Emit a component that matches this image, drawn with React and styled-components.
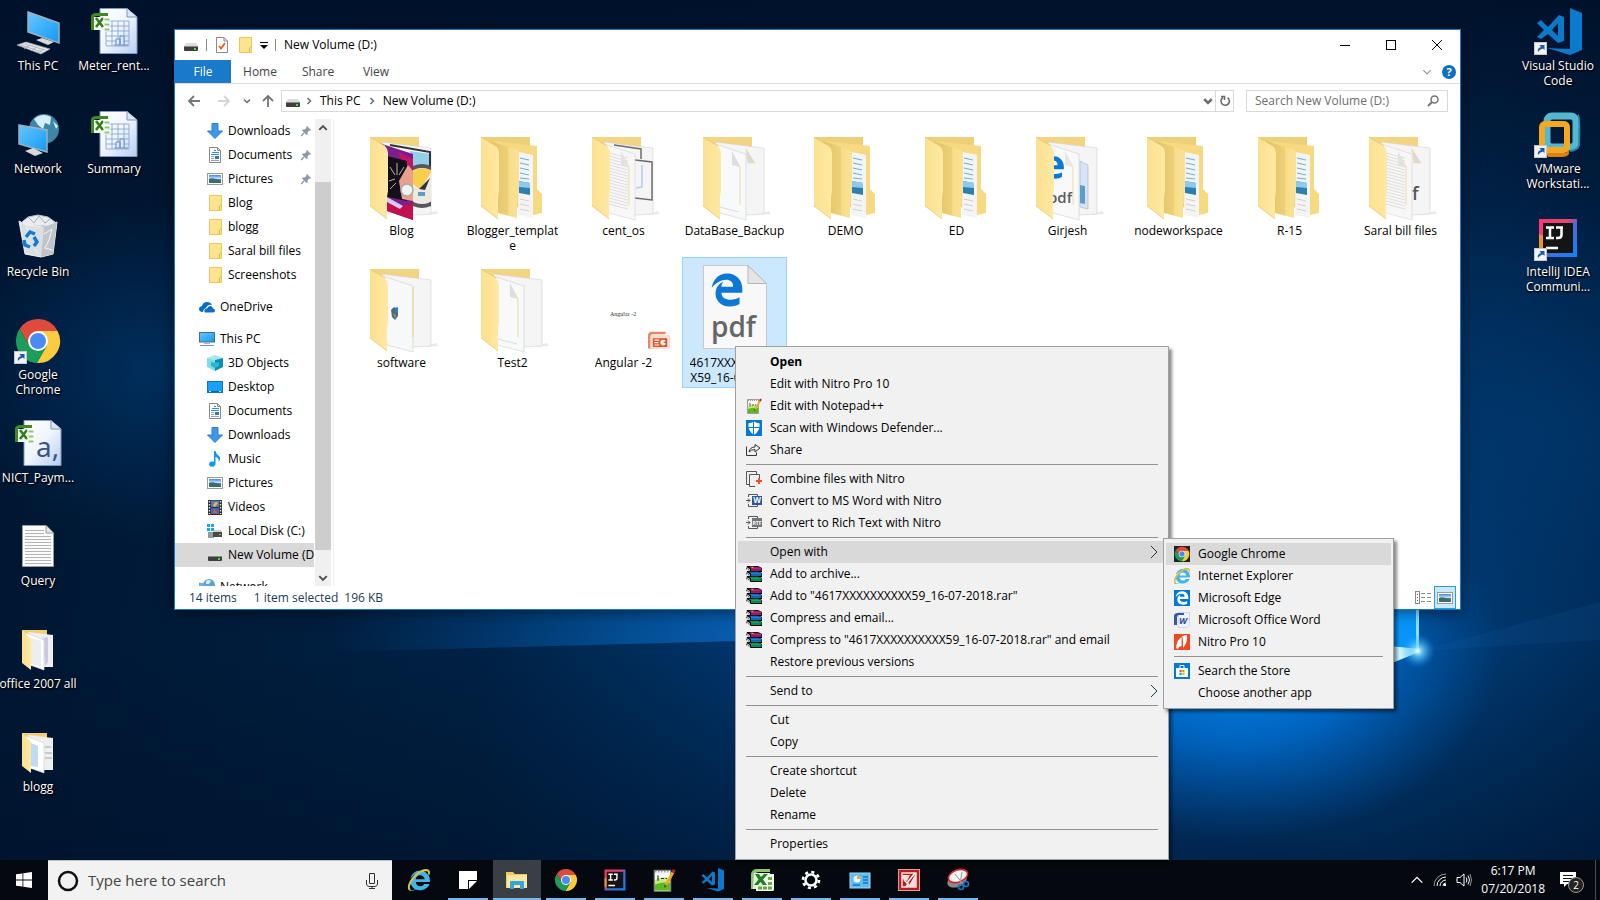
import React from "react";
import styled, { createGlobalStyle } from "styled-components";
import { FaEdgeLegacy, FaInternetExplorer } from "react-icons/fa6";

const GlobalStyle = createGlobalStyle`
  * {
    box-sizing: border-box;
  }
  body {
    margin: 0;
    background: #00142e;
    font-family: "Open Sans", "Noto Sans", sans-serif;
    font-size: 12px;
    line-height: 15px;
    color: #000;
  }
  button, input {
    font: inherit;
    color: inherit;
    border: none;
    background: none;
    padding: 0;
    margin: 0;
  }
  svg {
    display: block;
    flex-shrink: 0;
  }
`;

/* ---------- wallpaper ---------- */

const Wallpaper = () => (
  <WallpaperSvg viewBox="0 0 1600 900" preserveAspectRatio="none" aria-hidden="true">
    <defs>
      <linearGradient id="base" x1="0" x2="1">
        <stop offset="0" stopColor="#001733" />
        <stop offset="0.3" stopColor="#002144" />
        <stop offset="0.6" stopColor="#00468a" />
        <stop offset="0.85" stopColor="#004484" />
        <stop offset="1" stopColor="#002c5a" />
      </linearGradient>
      <linearGradient id="topDark" x1="0" x2="0" y1="0" y2="1">
        <stop offset="0" stopColor="#00122b" stopOpacity="1" />
        <stop offset="0.5" stopColor="#00122b" stopOpacity="0.1" />
        <stop offset="0.72" stopColor="#00122b" stopOpacity="0" />
        <stop offset="1" stopColor="#00122b" stopOpacity="0.75" />
      </linearGradient>
      <linearGradient id="beam" x1="0" x2="1">
        <stop offset="0" stopColor="#0063b8" stopOpacity="0" />
        <stop offset="1" stopColor="#0a6ac4" stopOpacity="0.75" />
      </linearGradient>
      <radialGradient id="glow">
        <stop offset="0" stopColor="#0090ff" />
        <stop offset="0.5" stopColor="#0074dc" stopOpacity="0.7" />
        <stop offset="1" stopColor="#0060c0" stopOpacity="0" />
      </radialGradient>
      <radialGradient id="flare">
        <stop offset="0" stopColor="#fff" />
        <stop offset="0.25" stopColor="#7fe0ff" stopOpacity="0.8" />
        <stop offset="1" stopColor="#1590ff" stopOpacity="0" />
      </radialGradient>
      <radialGradient id="haze">
        <stop offset="0" stopColor="#00386e" stopOpacity="0.7" />
        <stop offset="1" stopColor="#00386e" stopOpacity="0" />
      </radialGradient>
      <linearGradient id="flap" x1="0" x2="1">
        <stop offset="0" stopColor="#fbe08f" />
        <stop offset="1" stopColor="#ffe9a2" />
      </linearGradient>
      <linearGradient id="flapDeep" x1="0" x2="1">
        <stop offset="0" stopColor="#e3c263" />
        <stop offset="0.6" stopColor="#ecd078" />
        <stop offset="0.65" stopColor="#f8dd8a" />
        <stop offset="1" stopColor="#fbe294" />
      </linearGradient>
      <linearGradient id="screen" x1="0" x2="1" y1="0" y2="1">
        <stop offset="0" stopColor="#69c5ff" />
        <stop offset="1" stopColor="#109bf4" />
      </linearGradient>
      <linearGradient id="paper" x1="0" x2="1" y1="0" y2="1">
        <stop offset="0" stopColor="#fff" />
        <stop offset="0.5" stopColor="#f0f5fd" />
        <stop offset="1" stopColor="#b5cdf2" />
      </linearGradient>
      <linearGradient id="sky" x1="0" x2="0" y1="0" y2="1">
        <stop offset="0" stopColor="#3d87dc" />
        <stop offset="0.5" stopColor="#dbeefc" />
        <stop offset="0.55" stopColor="#4e8d80" />
        <stop offset="1" stopColor="#2d6a86" />
      </linearGradient>
      <linearGradient id="ring" x1="0" x2="1" y1="0" y2="1">
        <stop offset="0" stopColor="#ff3570" />
        <stop offset="0.4" stopColor="#e8456f" />
        <stop offset="0.55" stopColor="#4b6bd6" />
        <stop offset="1" stopColor="#0a84ff" />
      </linearGradient>
      <clipPath id="backPage">
        <path d="M12 5 L61 11 V77 L43 80 L6 70Z" />
      </clipPath>
    </defs>
    <rect width="1600" height="900" fill="url(#base)" />
    <rect width="1600" height="900" fill="url(#topDark)" />
    <ellipse cx="150" cy="370" rx="200" ry="170" fill="url(#haze)" />
    <ellipse cx="1540" cy="430" rx="240" ry="230" fill="url(#haze)" />
    <ellipse cx="1240" cy="650" rx="260" ry="190" fill="url(#glow)" />
    <path d="M330 610 H740 V641 L330 652Z" fill="url(#beam)" />
    <path d="M1418 651 L1600 602 V640 Z" fill="#1d6fb4" opacity="0.12" />
    <path d="M1300 600 H1418 V651 L1300 646 Z" fill="#0894f8" />
    <path d="M1380 645 L1419 649 L1419 652 L1380 668 Z" fill="#c9f3ff" />
    <rect x="1416" y="600" width="3" height="51" fill="#8adfff" />
    <circle cx="1418" cy="651" r="17" fill="url(#flare)" />
  </WallpaperSvg>
);

/* ---------- small icons ---------- */

const Svg = ({ s = 16, v = 16, children }) => (
  <svg width={s} height={s} viewBox={`0 0 ${v} ${v}`} aria-hidden="true">
    {children}
  </svg>
);

const DriveIcon = () => (
  <Svg>
    <path d="M3 6 H13 L15 9 H1 Z" fill="#dcdcdc" />
    <rect x="1" y="9" width="14" height="5" rx="1" fill="#3e3e3e" />
    <rect x="1" y="9" width="14" height="1" fill="#8b8b8b" />
    <rect x="11" y="11" width="2" height="2" fill="#39e639" />
  </Svg>
);

const SheetIcon = () => (
  <Svg>
    <path d="M2.5 .5 H10 L13.5 4 V15.5 H2.5 Z" fill="#fff" stroke="#8a8a8a" />
    <path d="M10 .5 V4 H13.5" fill="none" stroke="#8a8a8a" />
    <path d="M5 9 L7 11.5 L11 6" fill="none" stroke="#f05a1a" strokeWidth="1.8" />
  </Svg>
);

const FolderIcon = () => (
  <Svg>
    <path d="M2.5 .5 H14.5 V15.5 H2.5 Z" fill="#ffe38e" stroke="#eac859" />
    <path d="M12.5 15 V11 L14.5 9.5" fill="none" stroke="#dfb93f" />
  </Svg>
);

const DownloadIcon = () => (
  <Svg>
    <path d="M5 .5 H11 V8 H15.5 L8 15.5 L.5 8 H5 Z" fill="#3e97e6" stroke="#2f80cc" />
  </Svg>
);

const DocumentIcon = () => (
  <Svg>
    <path d="M2.5 .5 H10.5 L13.5 3.5 V15.5 H2.5 Z" fill="#fff" stroke="#868686" />
    <path d="M10.5 .5 V3.5 H13.5" fill="none" stroke="#868686" />
    <path d="M7 3.5 H9 M5 5.5 H12 M4 7.5 H12" stroke="#2c8fd8" />
    <path d="M4 9.5 H7 M4 11.5 H7 M4 13.5 H12" stroke="#8fa5b8" />
    <rect x="8" y="9" width="4" height="3" fill="#3377a9" />
  </Svg>
);

const PictureIcon = () => (
  <Svg>
    <rect x=".5" y="2.5" width="15" height="11" fill="#fff" stroke="#9a9a9a" />
    <rect x="2" y="4" width="12" height="8" fill="url(#sky)" />
    <path d="M2 8 Q6 6 14 10 V12 H2 Z" fill="#3b6d6a" />
  </Svg>
);

const OneDriveIcon = () => (
  <Svg>
    <path d="M4 13 Q0 13 0 10 Q0 7.5 3 7 Q4 3 8 3 Q11.5 3 13 6 Q9 5 7 9 Q4.5 9.5 4 13Z" fill="#0a6cc9" />
    <path d="M6 13.5 Q4.5 12 6 10 L8 9.5 Q9 6.5 12 7 Q13.5 7.5 14 9.5 Q16 10 16 11.5 Q16 13.5 14 13.5Z" fill="#0a6cc9" />
  </Svg>
);

const PcIcon = () => (
  <Svg>
    <rect x=".5" y="1.5" width="15" height="9.5" fill="url(#screen)" stroke="#4a6c86" />
    <path d="M5 12 H11 V13 H5Z" fill="#a9b7c2" />
    <path d="M1 14.5 H15" stroke="#8095a5" />
  </Svg>
);

const CubeIcon = () => (
  <Svg>
    <path d="M0 3 L8 0 L16 3 L8 5Z" fill="#9fe8ef" />
    <path d="M0 3 L8 5 V16 L0 12Z" fill="#7ddde6" />
    <path d="M16 3 L8 5 V16 L16 12Z" fill="#0b8fae" />
    <path d="M4 7 L8 8 V13 L4 11Z" fill="#2fb6cc" />
    <path d="M8 8 L12 7 V11 L8 13Z" fill="#27b9dd" />
  </Svg>
);

const DesktopIcon = () => (
  <Svg>
    <rect x=".5" y="2.5" width="15" height="11" fill="#18a0fb" stroke="#0f74bd" />
    <path d="M1 12.5 H15" stroke="#0765ac" />
    <path d="M2 12.5 H4 M12 12.5 H14" stroke="#c6e8ff" />
  </Svg>
);

const MusicIcon = () => (
  <Svg>
    <path d="M7 0 H8.5 Q9 3 12 5 Q14.5 8 11.5 11 Q12.5 7 8.5 6 V13 A3.2 2.7 0 1 1 7 10.8 Z" fill="#0d99f2" />
  </Svg>
);

const VideoIcon = () => (
  <Svg>
    <rect x="1" y="1" width="14" height="15" fill="#2e2e2e" />
    <path d="M2.5 2 V15 M13.5 2 V15" stroke="#e8e8e8" strokeWidth="1.4" strokeDasharray="1.5 1.5" />
    <rect x="4" y="1.5" width="8" height="6.5" fill="#4a7ad2" />
    <rect x="4" y="9" width="8" height="6" fill="#3b67c4" />
    <path d="M6 7 Q8 1 11 4 L8 8Z" fill="#f1b82c" />
    <path d="M5 14 L8 10 L11 14Z" fill="#d8562b" />
  </Svg>
);

const LocalDiskIcon = () => (
  <Svg>
    <path d="M0 1 H3 V4 H0Z M4 1 H7 V4 H4Z M0 5 H3 V8 H0Z M4 5 H7 V8 H4Z" fill="#17a8ee" />
    <path d="M1 9 H7 V15 H1Z" fill="#8aa0a0" />
    <path d="M7 7 H14 L15 9 H6Z" fill="#cfcfcf" />
    <rect x="6" y="9" width="9" height="5" fill="#4a4a4a" />
    <rect x="12" y="11" width="2" height="1" fill="#39e639" />
  </Svg>
);

const NetworkSmallIcon = () => (
  <Svg>
    <circle cx="10" cy="6" r="6" fill="#5ba5cf" />
    <path d="M7 2 Q10 0 12 2 L10 5 L7 5Z" fill="#d6ecf5" />
    <path d="M0 4 L9 6 V13 L0 11Z" fill="url(#screen)" stroke="#8299aa" />
  </Svg>
);

const PinIcon = () => (
  <Svg s={12} v={12}>
    <path d="M7 1 L11 5 L10 6 L9 5.5 L7.5 7.5 L7.5 9.5 L6.5 10 L2 5.5 L3 4.5 H4.5 L6.5 3 L6 2 Z" fill="#8a99a5" />
    <path d="M4 8 L1 11" stroke="#8a99a5" strokeWidth="1.2" />
  </Svg>
);

const Chevron = ({ dir = "right", size = 8, color = "#6b6b6b", w = 1.5 }) => {
  const paths = {
    right: "M2.5 1 L5.5 4 L2.5 7",
    down: "M1 2.5 L4 5.5 L7 2.5",
    up: "M1 5.5 L4 2.5 L7 5.5",
  };
  return (
    <Svg s={size} v={8}>
      <path d={paths[dir]} fill="none" stroke={color} strokeWidth={w} />
    </Svg>
  );
};

const Arrow = ({ dir = "left", color = "#757575" }) => {
  const paths = {
    left: "M13 7 H2 M7 2 L2 7 L7 12",
    right: "M1 7 H12 M7 2 L12 7 L7 12",
    up: "M7 13 V2 M2 7 L7 2 L12 7",
  };
  return (
    <Svg s={14} v={14}>
      <path d={paths[dir]} fill="none" stroke={color} strokeWidth="1.8" />
    </Svg>
  );
};

const ChromeIcon = ({ s = 16, tile }) => (
  <Svg s={s} v={48}>
    {tile && <rect width="48" height="48" fill="#222" />}
    <path d="M24 14 H43.6 A22 22 0 0 0 5.54 12.03 L15.34 29 Z" fill="#dd4b3e" />
    <path d="M43.6 14 A22 22 0 0 1 22.86 45.97 L32.66 29 L24 14Z" fill="#fdcb3f" />
    <path d="M22.86 45.97 A22 22 0 0 1 5.54 12.03 L15.34 29 L32.66 29Z" fill="#1b9e5a" />
    <circle cx="24" cy="24" r="10" fill="#fff" />
    <circle cx="24" cy="24" r="8" fill="#4a8af4" />
  </Svg>
);

const IeIcon = ({ s = 16 }) => (
  <Stack>
    <FaInternetExplorer size={s} color="#45b5e8" />
    <Svg s={s}>
      <path d="M1.5 15 Q-1 13 3 7.5 Q8 1 13 .8 Q16 1 15 4" fill="none" stroke="#f3c31c" strokeWidth="1.3" />
    </Svg>
  </Stack>
);

const EdgeTile = () => (
  <Tile $bg="#0078d7">
    <FaEdgeLegacy size={14} color="#fff" />
  </Tile>
);

const NotepadIcon = ({ s = 16 }) => (
  <Svg s={s}>
    <path d="M1.5 1.5 H12.5 V15.5 H1.5Z" fill="#f7f7f7" stroke="#777" strokeWidth=".7" />
    <path d="M2 8 Q7 5 12 7 V15 H2Z" fill="#c5ea7e" />
    <path d="M2 11 Q7 9 12 10 V15 H2Z" fill="#5cba1f" />
    <path d="M2 2.5 H12" stroke="#999" strokeDasharray="1 1" />
    <path d="M4 5 V8.5 M6 7 H8 M9 7 H10" stroke="#333" strokeWidth=".8" />
    <path d="M8.5 11 L13 2.5 L14.8 3.5 L10 12Z" fill="#f2a626" />
    <path d="M13 2.5 L14 .6 L15.8 1.6 L14.8 3.5Z" fill="#b5251d" />
    <path d="M8.5 11 L8 13.2 L10 12Z" fill="#444" />
  </Svg>
);

const DefenderIcon = () => (
  <Svg>
    <rect width="16" height="16" fill="#0078d7" />
    <path d="M8 1.5 Q11 3.5 13.5 3.3 Q14.5 11 8 14.8 Q1.5 11 2.5 3.3 Q5 3.5 8 1.5Z" fill="#fff" />
    <path d="M7.5 1 V15 M2 7.5 H14" stroke="#0078d7" />
  </Svg>
);

const ShareIcon = () => (
  <Svg>
    <path d="M.5 4.5 V13.5 H10.5 V10.5" fill="none" stroke="#333" />
    <path d="M3 10 Q4 5 9 5 V2.5 L14 6 L9 10 V7.5 Q5 7.5 3 10Z" fill="none" stroke="#333" strokeLinejoin="round" />
  </Svg>
);

const CombineIcon = () => (
  <Svg>
    <path d="M3 13.5 H.5 V.5 H10.5 V3" fill="none" stroke="#555" />
    <path d="M9 15.5 H3.5 V3.5 H13.5 V7" fill="none" stroke="#555" />
    <path d="M13 7 V13 M10 10 H16" stroke="#f4511e" strokeWidth="2" />
  </Svg>
);

const ConvertIcon = ({ color, label }) => (
  <Svg>
    <path d="M2.5 4 V1.5 H11.5 V3 M2.5 11 V13.5 H11.5 V12 M0 7.5 H4 M2 5.5 L4 7.5 L2 9.5" fill="none" stroke="#555" />
    <rect x="6" y="3" width="10" height="9" fill={color} />
    <text x="11" y="10" textAnchor="middle" fontSize={label.length > 1 ? 5 : 8} fontWeight="700" fill="#fff">
      {label}
    </text>
  </Svg>
);

const books = [
  { cover: "#a3146b", top: "#c73a90", y: 0 },
  { cover: "#1469c4", top: "#28a0e6", y: 5 },
  { cover: "#0b8f55", top: "#1cc584", y: 10 },
];

const RarIcon = () => (
  <Svg>
    {books.map(({ cover, top, y }) => (
      <g key={y}>
        <path d={`M1 ${y} H12 L16 ${y + 2} V${y + 6} H5 L0 ${y + 3} Z`} fill="#000" />
        <path d={`M2 ${y + 0.7} H12 L15.5 ${y + 2.2} H5 Z`} fill={cover} />
        <rect x="5" y={y + 2.2} width="10.5" height="1.4" fill={top} />
        <rect x="5" y={y + 3.6} width="10.5" height="1.4" fill={cover} />
        <path d={`M.5 ${y + 1.6} L4 ${y + 3.6} M.5 ${y + 3} L4 ${y + 5}`} stroke="#fff" strokeWidth=".9" />
      </g>
    ))}
    <path d="M4 .8 H8 L7 2Z" fill="#e6bd2a" />
  </Svg>
);

const WordIcon = () => (
  <Svg>
    <path d="M4 .5 H15.5 V13 L13 15.5 H4Z" fill="#eef2fa" stroke="#b7c3da" strokeWidth=".6" />
    <path d="M0 4 Q0 1 4 1 H10 V3 H5 Q3 3 3 6 V13 H0Z" fill="#3657a6" />
    <text x="9" y="12" textAnchor="middle" fontSize="9" fontStyle="italic" fontWeight="700" fill="#2b4f9e">
      W
    </text>
  </Svg>
);

const NitroIcon = () => (
  <Svg>
    <rect width="16" height="16" fill="#f4471f" />
    <path d="M2 14 Q3 5 8 3 V12 Q5 12 4 15Z" fill="#fff" />
    <path d="M8 2 L13 1 Q14 8 9 14 V7Z" fill="#fff" />
    <path d="M8 3 V13" stroke="#f4471f" strokeWidth=".7" />
  </Svg>
);

const StoreIcon = () => (
  <Svg>
    <rect width="16" height="16" fill="#0078d7" />
    <path d="M6 5 V2.5 H10 V5" fill="none" stroke="#fff" />
    <rect x="2" y="5" width="12" height="9" fill="#fff" />
    <path d="M5.5 7 H7.7 V9.2 H5.5Z" fill="#f25022" />
    <path d="M8.3 7 H10.5 V9.2 H8.3Z" fill="#7fba00" />
    <path d="M5.5 9.8 H7.7 V12 H5.5Z" fill="#00a4ef" />
    <path d="M8.3 9.8 H10.5 V12 H8.3Z" fill="#ffb900" />
  </Svg>
);

const VsCodeShape = () => (
  <>
    <path d="M34 0 L46 5 V42 L34 47 L11 40 L34 41Z" fill="#0a7acc" />
    <path
      d="M1 15 L5 12 L12 19 L23 7 L28 9 V33 L22 35 L12 26 L5 31 L1 29 L8 22Z M22 15 L16 22 L22 28Z"
      fill="#0a7acc"
      fillRule="evenodd"
    />
  </>
);

const VsCodeIcon = ({ s = 24 }) => (
  <Svg s={s} v={48}>
    <VsCodeShape />
  </Svg>
);

const IntellijShape = () => (
  <>
    <path d="M5 5 H43 V43 H5Z" fill="url(#ring)" />
    <path d="M5 20 L14 24 L8 38 L5 36Z" fill="#f09132" />
    <rect x="9" y="9" width="30" height="30" fill="#141414" />
    <path
      d="M12 13.5 H20 M12 24 H20 M16 13 V24 M22 13.5 H29 M27.5 13 V21 Q27.5 24 24 24 H22 M12 34 H24"
      fill="none"
      stroke="#fff"
      strokeWidth="2.5"
    />
  </>
);

const IntellijIcon = () => (
  <svg width="22" height="22" viewBox="4 4 40 40" aria-hidden="true">
    <IntellijShape />
  </svg>
);

const ExcelIcon = () => (
  <Svg s={24} v={24}>
    <path d="M1 6 Q2 1 7 1 H20 V4 H8 Q4 5 4 9 V21 H1Z" fill="#8cc673" />
    <path d="M4 5 H20 L18 21 H3Z" fill="#e3f2dc" />
    <path d="M14 6 H24 V22 L23 23 H6 V19 H14Z" fill="#f3faf0" />
    <path d="M18 9 H22 V12 H18Z M18 14 H22 V17 H18Z M18 18.5 H22 V21.5 H18Z M13 18.500 H17 V21.5 H13Z M8 18.5 H12 V21.5 H8Z" fill="#62ad3e" />
    <path d="M5 6 H9 L11 9 L14 6 H18 L13 11.5 L17 17 H13 L10.500 14 L8 17 H4 L8.5 11.5Z" fill="#237d22" />
  </Svg>
);

/* ---------- desktop icons ---------- */

const Shortcut = () => (
  <>
    <rect x="0.5" y="34.5" width="12" height="12" fill="#f2f2f2" stroke="#c8c8c8" />
    <path d="M4 44 Q3 40 7 39 L5.5 37 H10.5 V42 L9 40.5 Q5.5 41 4 44Z" fill="#1c5aa8" />
  </>
);

const PcArt = () => (
  <Svg s={48} v={48}>
    <path d="M14 4 L45 15 V35 L14 24Z" fill="url(#screen)" stroke="#9fb0bd" strokeWidth="1.5" />
    <path d="M22 32 L28 30 L40 34 L34 37Z" fill="#d6dadd" />
    <path d="M3 37 L12 34 L36 41 L27 46Z" fill="#e4e7ea" stroke="#a3a9ae" strokeWidth=".7" />
    <path d="M7 37 L28 44 M11 36 L31 42 M10 41 L16 37 M17 43 L23 39 M24 45 L30 41" stroke="#a3a9ae" strokeWidth=".8" />
  </Svg>
);

const NetworkArt = () => (
  <Svg s={48} v={48}>
    <circle cx="30" cy="18" r="15" fill="#3c86a8" />
    <path d="M20 8 Q28 1 37 6 L36 14 L31 12 L29 18 L24 14 Z M39 10 L44 15 L42 18Z" fill="#d3eef7" />
    <path d="M5 14 L33 19 V41 L5 33Z" fill="url(#screen)" stroke="#9fb0bd" strokeWidth="1.5" />
    <path d="M11 40 L19 37 L29 42 L21 45Z" fill="#d6dadd" />
  </Svg>
);

const RecycleArt = () => (
  <Svg s={48} v={48}>
    <path d="M8 8 L14 3 L24 1 L34 3 L41 8 L36 12 H12Z" fill="#e9ecee" stroke="#b5bcc1" />
    <path d="M14 3 L20 9 L25 2 L31 9 L36 5" fill="none" stroke="#a9b1b7" />
    <path d="M5 7 L12 11 L30 13 L43 8 L39 40 L27 43 L11 40Z" fill="#dcdfe1" stroke="#f4f5f6" />
    <path d="M30 13 L43 8 L39 40 L27 43Z" fill="#bfc5c9" />
    <path d="M30 20 L38 15 L35 26 L31 34 L38 36 M12 13 L16 18 M20 35 L25 40" stroke="#f5f6f7" fill="none" />
    <path d="M12 23 L16 18 L21 20 M20 23 L23 28 L20 32 M16 33 L11 31 L10 26" fill="none" stroke="#0f7bd8" strokeWidth="3.5" />
  </Svg>
);

const ExcelBadge = () => (
  <>
    <path d="M1 8 Q2 5 6 5 H18 V8 H6 Q4 8 4 11 V22 H1Z" fill="#3f8a25" />
    <path d="M4 9 H17 V22 H4Z" fill="#f0f7ec" />
    <path d="M6 10 L13 19 M13 10 L6 19" stroke="#2f7d1c" strokeWidth="2.5" />
    <path d="M14 10 H20 V13 H14Z M14 15 H20 V18 H14Z M14 20 H20 V23 H14Z" fill="#8cc46f" stroke="#fff" />
  </>
);

const SpreadsheetArt = () => (
  <Svg s={48} v={48}>
    <path d="M10 .5 H37 L47 9 V45.5 H10Z" fill="url(#paper)" stroke="#8097bd" />
    <path d="M37 .5 V9 H47" fill="#d8e4f7" stroke="#8097bd" />
    <path d="M16 13 H39 V38 H16Z M16 18 H39 M16 23 H39 M16 28 H39 M16 33 H39 M22 13 V38 M28 13 V38 M34 13 V38" fill="none" stroke="#92add6" />
    <path d="M26 37 V31 H30 V37 M30 37 V28 H34 V37 M24 37 H38" fill="#dbe8fb" stroke="#6d8dc2" />
    <ExcelBadge />
  </Svg>
);

const CsvArt = () => (
  <Svg s={48} v={48}>
    <path d="M10 .5 H37 L47 9 V45.5 H10Z" fill="url(#paper)" stroke="#8097bd" />
    <path d="M37 .5 V9 H47" fill="#d8e4f7" stroke="#8097bd" />
    <text x="22" y="37" fontSize="28" fontFamily="Noto Sans, sans-serif" fill="#3c5683">
      a,
    </text>
    <ExcelBadge />
  </Svg>
);

const TextArt = () => (
  <Svg s={48} v={48}>
    <path d="M8.5 2.5 H32 L39.5 10 V43.5 H8.5Z" fill="#fafafa" stroke="#9a9a9a" />
    <path d="M32 2.5 V10 H39.5" fill="#e5e5e5" stroke="#9a9a9a" />
    <path
      d="M11 7.5 H30 M11 10.5 H30 M11 13.5 H37 M11 16.5 H37 M11 19.5 H37 M11 22.5 H37 M11 25.5 H37 M11 28.5 H37 M11 31.5 H37 M11 34.5 H37 M11 37.5 H37 M11 40.5 H37"
      stroke="#b4b4b4"
    />
  </Svg>
);

const SmallFolderArt = ({ blue }) => (
  <Svg s={48} v={48}>
    <path d="M8 4 H33 V40 H16Z" fill="#f2cf74" />
    <path d="M14 6 L39 9 V41 L30 41Z" fill="#efefef" />
    {blue ? (
      <path d="M31 18 H37 M31 24 H38 M31 29 H38" stroke="#c9c9c9" strokeWidth="2" />
    ) : (
      <path d="M29 12 L34 11 V36 L31 40Z" fill="#c9c9e6" />
    )}
    <path d="M12 7 L30 14 V44 L16 39Z" fill="#fff" stroke="#d6d6d6" strokeWidth=".7" />
    {blue ? (
      <path d="M17 14 L24 17 V38 L17 37Z" fill="#bcdcf6" />
    ) : (
      <path d="M17 12 L27 15 V41 L17 38Z" fill="#eceef0" />
    )}
    <path d="M8 4 L17 13 V44 L8 37Z" fill="url(#flap)" />
  </Svg>
);

const ChromeArt = () => (
  <Stack>
    <ChromeIcon s={48} />
    <Svg s={48} v={48}>
      <Shortcut />
    </Svg>
  </Stack>
);

const VsCodeArt = () => (
  <Svg s={48} v={48}>
    <g transform="translate(2 0)">
      <VsCodeShape />
    </g>
    <Shortcut />
  </Svg>
);

const VmwareArt = () => (
  <Svg s={48} v={48}>
    <rect x="13" y="5" width="29" height="31" rx="5" fill="none" stroke="#55b8d3" strokeWidth="7" />
    <path d="M44 4 Q46 5 45 34 Q44 39 36 40" fill="none" stroke="#2a86a6" strokeWidth="2" />
    <rect x="8" y="13" width="25" height="26" rx="3" fill="none" stroke="#f6a821" strokeWidth="6" />
    <path d="M12 42 H32 L35 39 V43 Q33 46 28 46 H14Z" fill="#e07f12" />
    <Shortcut />
  </Svg>
);

const IntellijArt = () => (
  <Svg s={48} v={48}>
    <IntellijShape />
    <Shortcut />
  </Svg>
);

/* ---------- large folder thumbnails ---------- */

const lineRows = [16, 19, 22, 25, 28, 31, 34, 37, 40, 43, 46, 49, 52, 55, 58, 61, 64, 67];

const Lines = () => (
  <>
    {lineRows.map((y) => (
      <path key={y} d={`M17 ${y} L36 ${y + 5}`} stroke="#dedede" />
    ))}
    <path d="M29 16 L37 30 V68" fill="none" stroke="#ecd9a4" />
    <path d="M29 14 V28 L37 30Z" fill="#e2e2e2" />
  </>
);

const PageContent = ({ kind }) => {
  switch (kind) {
    case "blog":
      return (
        <>
          <g clipPath="url(#backPage)">
            <path d="M40 14 L60 17 V37 H40Z" fill="#93cfe6" />
            <path d="M20 8 L60 15 V40" fill="none" stroke="#333" strokeWidth="2" />
            <circle cx="52" cy="49" r="22" fill="#57565e" />
            <circle cx="52" cy="49" r="18" fill="#ece9e2" />
            <path d="M50 52 L36 42 A18 18 0 0 1 62 34Z" fill="#f7cf4c" />
            <path d="M49 52 L60 41 L55 53Z" fill="#333" />
            <rect x="48" y="55" width="7" height="4" fill="#5e9cc4" />
          </g>
          <path d="M6 5 L43 17 V83 L17 74 V14Z" fill="#7c1f8d" />
          <path d="M28 15 L43 22 V50 L34 30Z" fill="#c4146a" />
          <path d="M17 19 L37 24 V64 L17 60Z" fill="#141019" />
          <path d="M27 26 V38 M20 30 L25 38 M34 30 L29 38 M19 44 L25 42 M20 52 L26 46" stroke="#ddd" strokeWidth=".8" />
          <path d="M29 44 L38 28 L43 34 V64 L32 62Z" fill="#e9a18b" />
          <circle cx="37" cy="53" r="6" fill="#f2f2f2" stroke="#a9a9a9" strokeWidth="1.5" />
          <path d="M17 64 L30 70 L43 66 V83 L17 74Z" fill="#c2104f" />
          <path d="M17 60 L33 69 L30 72 L17 65Z" fill="#d9c9f2" />
        </>
      );
    case "cent":
      return (
        <>
          <path d="M22 8 L49 12 V22 M43 23 L60 25 V63 L43 61" fill="none" stroke="#6d6d6d" strokeWidth="1.5" />
          <path d="M50 28 V50 L44 51" fill="none" stroke="#c3d3ec" strokeWidth="2" />
          <path d="M6 5 L43 17 V83 L17 76Z" fill="#f7f7f7" stroke="#d5d5d5" strokeWidth=".6" />
          <Lines />
        </>
      );
    case "girjesh":
      return (
        <>
          <path d="M44 24 L52 28 V72 L44 70Z" fill="#d7e4f6" stroke="#9fb4cf" strokeWidth=".6" />
          <path d="M44 48 L49 49 V67 L44 66Z" fill="#5a9fc9" />
          <path d="M6 5 L43 17 V83 L17 76Z" fill="#f9f9f9" stroke="#cfcfcf" strokeWidth=".6" />
          <g transform="translate(6 19)">
            <FaEdgeLegacy size={23} color="#0a78d4" />
          </g>
          <text x="12" y="66" fontSize="15" fontWeight="600" fill="#5c5c5c">
            pdf
          </text>
          <path d="M29 16 L37 30 V68" fill="none" stroke="#ecd9a4" />
          <path d="M29 14 V28 L37 30Z" fill="#e6e6e6" />
        </>
      );
    case "saral":
      return (
        <>
          <text x="43" y="63" fontSize="18" fontWeight="600" fill="#555">
            f
          </text>
          <path d="M6 5 L43 17 V83 L17 76Z" fill="#f7f7f7" stroke="#d5d5d5" strokeWidth=".6" />
          <Lines />
        </>
      );
    case "software":
      return (
        <>
          <path d="M10 6 L43 17 V83 L17 76Z" fill="#f7f8f9" stroke="#cfcfcf" strokeWidth=".6" />
          <path d="M43 18 V68" stroke="#ecd28a" />
          <path d="M21 41 L24 38 L28 40 V47 L25 51 L22 48Z" fill="#5d6670" />
          <path d="M25 39 L28 38 V43 L25 44Z" fill="#1f7fe0" />
          <path d="M23 45 L26 46 L25 49Z" fill="#6fae8c" />
        </>
      );
    default:
      return (
        <>
          <path d="M6 5 L43 17 V83 L17 76Z" fill="#f8f9fa" stroke="#cfcfcf" strokeWidth=".6" />
          <path d="M29 16 L37 30 V68" fill="none" stroke="#ecd9a4" />
          <path d="M29 14 V28 L37 30Z" fill="#dedede" />
          <path d="M17 70 L36 75" stroke="#dcdcdc" />
        </>
      );
  }
};

const FolderArt = ({ kind }) => (
  <svg width="68" height="84" viewBox="0 0 68 84" aria-hidden="true">
    {kind === "sub" ? (
      <>
        <path d="M0 0 H49 V12 L38 16 V70 L17 76Z" fill="#eccf77" />
        <path d="M9 4 L56 9 V52 L61 57 V76 L52 78 L38 70Z" fill="#f6d980" />
        <path d="M38 15 L52 18 V81 L37 78Z" fill="#f4f4f4" />
        <path d="M39 21 L48 23 M39 26 L48 28 M39 31 L48 33 M39 36 L48 38 M39 41 L48 42" stroke="#5fb2dd" />
        <path d="M38 44 L49 46 V58 L38 56Z" fill="#2f7fae" />
        <path d="M38 44 L49 46 V51 L38 50Z" fill="#8ccbf0" />
        <path d="M39 62 L48 64 M39 67 L48 69 M39 72 L48 74" stroke="#d0d0d0" />
        <path d="M9 4 L36 13 Q38 14 38 18 V53 L36 58 V81 L17 76Z" fill="url(#flapDeep)" />
      </>
    ) : (
      <>
        <path d="M40 82 L66 74 L68 77 L52 78Z" fill="#e9e9e9" />
        <path d="M0 0 H49 V20 H10Z" fill="#f3d480" />
        <path d="M12 5 L61 11 V77 L43 78Z" fill="#f5f5f5" stroke="#d2d2d2" strokeWidth=".6" />
        {(kind === "database" || kind === "saral") && (
          <path d="M43 12 L52 26 H45Z" fill="#d9d9d9" stroke="#ecd9a4" strokeWidth=".6" />
        )}
        <PageContent kind={kind} />
      </>
    )}
    <path d="M0 0 L15 9 Q18 12 18 16 V54 L17 60 V82 L0 69Z" fill="url(#flap)" />
    <path d="M0 0 L15 9 M0 69 L17 82" stroke="#e2c46a" strokeWidth=".7" />
  </svg>
);

const PdfArt = () => (
  <svg width="64" height="84" viewBox="0 0 64 84" aria-hidden="true">
    <path d="M.5 .5 H45 L63.5 19 V83.5 H.5Z" fill="#f8f8f8" stroke="#c6c6c6" />
    <path d="M45 .5 V18.5 H63.5Z" fill="#e4e4e4" stroke="#b5b5b5" />
    <g transform="translate(7 8)">
      <FaEdgeLegacy size={34} color="#0a78d4" />
    </g>
    <text x="8" y="72" fontSize="28" fontWeight="600" fill="#666">
      pdf
    </text>
  </svg>
);

const PptArt = () => (
  <svg width="96" height="84" viewBox="0 0 96 84" aria-hidden="true">
    <text x="34" y="51" fontSize="6" fontFamily="Liberation Serif, serif" fill="#333">
      Angular -2
    </text>
    <g transform="translate(72 66) scale(.8)">
      <path d="M0 5 Q1 1 5 1 H22 V4 H6 Q3 4 3 7 V22 H0Z" fill="#f0835f" />
      <path d="M4 6 H27 V20 L24 24 L3 22Z" fill="#fbe5dc" stroke="#dcb1a0" strokeWidth=".6" />
      <rect x="6" y="9" width="18" height="11" fill="#e1532a" />
      <path d="M8 11.5 H14 M8 14.5 H13 M8 17.5 H14" stroke="#fff" strokeWidth="1.5" />
      <circle cx="19" cy="14.5" r="3.5" fill="#fff" />
      <path d="M19 14.5 L23 12 V16Z" fill="#e1532a" />
    </g>
  </svg>
);

/* ---------- data ---------- */

const desktopLeft = [
  [
    ["This PC", <PcArt />],
    ["Network", <NetworkArt />],
    ["Recycle Bin", <RecycleArt />],
    ["Google Chrome", <ChromeArt />],
    ["NICT_Paym...", <CsvArt />],
    ["Query", <TextArt />],
    ["office 2007 all", <SmallFolderArt />],
    ["blogg", <SmallFolderArt blue />],
  ],
  [
    ["Meter_rent...", <SpreadsheetArt />],
    ["Summary", <SpreadsheetArt />],
  ],
];

const desktopRight = [
  ["Visual Studio Code", <VsCodeArt />],
  ["VMware Workstati...", <VmwareArt />],
  ["IntelliJ IDEA Communi...", <IntellijArt />],
];

const navItems = [
  { label: "Downloads", icon: <DownloadIcon />, pinned: true },
  { label: "Documents", icon: <DocumentIcon />, pinned: true },
  { label: "Pictures", icon: <PictureIcon />, pinned: true },
  { label: "Blog", icon: <FolderIcon /> },
  { label: "blogg", icon: <FolderIcon /> },
  { label: "Saral bill files", icon: <FolderIcon /> },
  { label: "Screenshots", icon: <FolderIcon /> },
  { label: "OneDrive", icon: <OneDriveIcon />, root: true },
  { label: "This PC", icon: <PcIcon />, root: true },
  { label: "3D Objects", icon: <CubeIcon /> },
  { label: "Desktop", icon: <DesktopIcon /> },
  { label: "Documents", icon: <DocumentIcon /> },
  { label: "Downloads", icon: <DownloadIcon /> },
  { label: "Music", icon: <MusicIcon /> },
  { label: "Pictures", icon: <PictureIcon /> },
  { label: "Videos", icon: <VideoIcon /> },
  { label: "Local Disk (C:)", icon: <LocalDiskIcon /> },
  { label: "New Volume (D:)", icon: <DriveIcon />, selected: true },
  { label: "Network", icon: <NetworkSmallIcon />, root: true },
];

const files = [
  ["Blog", "blog"],
  ["Blogger_templat\ne", "sub"],
  ["cent_os", "cent"],
  ["DataBase_Backup", "database"],
  ["DEMO", "sub"],
  ["ED", "sub"],
  ["Girjesh", "girjesh"],
  ["nodeworkspace", "sub"],
  ["R-15", "sub"],
  ["Saral bill files", "saral"],
  ["software", "software"],
  ["Test2", "plain"],
  ["Angular -2", "ppt"],
  ["4617XXXXXXXXX\nX59_16-07-2018", "pdf"],
];

const openWith = [
  { label: "Google Chrome", icon: <ChromeIcon tile />, hot: true },
  { label: "Internet Explorer", icon: <IeIcon /> },
  { label: "Microsoft Edge", icon: <EdgeTile /> },
  { label: "Microsoft Office Word", icon: <WordIcon /> },
  { label: "Nitro Pro 10", icon: <NitroIcon /> },
  null,
  { label: "Search the Store", icon: <StoreIcon /> },
  { label: "Choose another app" },
];

const menuItems = [
  { label: "Open", bold: true },
  { label: "Edit with Nitro Pro 10" },
  { label: "Edit with Notepad++", icon: <NotepadIcon /> },
  { label: "Scan with Windows Defender...", icon: <DefenderIcon /> },
  { label: "Share", icon: <ShareIcon /> },
  null,
  { label: "Combine files with Nitro", icon: <CombineIcon /> },
  { label: "Convert to MS Word with Nitro", icon: <ConvertIcon color="#2b579a" label="W" /> },
  { label: "Convert to Rich Text with Nitro", icon: <ConvertIcon color="#777" label="RTF" /> },
  null,
  { label: "Open with", hot: true, sub: openWith },
  { label: "Add to archive...", icon: <RarIcon /> },
  { label: 'Add to "4617XXXXXXXXXX59_16-07-2018.rar"', icon: <RarIcon /> },
  { label: "Compress and email...", icon: <RarIcon /> },
  { label: 'Compress to "4617XXXXXXXXXX59_16-07-2018.rar" and email', icon: <RarIcon /> },
  { label: "Restore previous versions" },
  null,
  { label: "Send to", arrow: true },
  null,
  { label: "Cut" },
  { label: "Copy" },
  null,
  { label: "Create shortcut" },
  { label: "Delete" },
  { label: "Rename" },
  null,
  { label: "Properties" },
];

const taskApps = [
  ["Internet Explorer", <IeIcon s={22} />, false],
  [
    "Sticky Notes",
    <Svg s={18} v={18}>
      <path d="M0 0 H18 V9 H9 V18 H0Z" fill="#fff" />
      <path d="M10 18 V10 H18Z" fill="#fff" />
    </Svg>,
    true,
  ],
  [
    "File Explorer",
    <Svg s={22} v={22}>
      <path d="M0 3 H7 L9 5 H21 V19 H0Z" fill="#f5c94e" />
      <path d="M1 6 H21 V19 H1Z" fill="#fde7a0" />
      <path d="M4 13 Q4 12 5 12 H17 Q18 12 18 13 V20 H14 V16 H8 V20 H4Z" fill="#31a6e0" />
    </Svg>,
    true,
  ],
  ["Google Chrome", <ChromeIcon s={24} />, true],
  ["IntelliJ IDEA", <IntellijIcon />, true],
  ["Notepad++", <NotepadIcon s={24} />, true],
  ["Visual Studio Code", <VsCodeIcon s={24} />, true],
  ["Excel", <ExcelIcon />, true],
  [
    "Settings",
    <Svg s={20} v={20}>
      <circle cx="10" cy="10" r="5.5" fill="none" stroke="#fff" strokeWidth="2.5" />
      <circle cx="10" cy="10" r="8" fill="none" stroke="#fff" strokeWidth="2.6" strokeDasharray="3.14 3.14" />
    </Svg>,
    true,
  ],
  [
    "Control Panel",
    <Svg s={22} v={22}>
      <rect x="1" y="4" width="20" height="15" fill="#5dbdf3" stroke="#a5dcfa" />
      <circle cx="8" cy="10" r="3.5" fill="#e8f6ff" />
      <path d="M8 10 V6.5 A3.5 3.5 0 0 1 11.5 10Z" fill="#f2a53a" />
      <path d="M14 8 H19 M14 11 H19 M14 14 H19 M4 16 H11" stroke="#1a72b8" strokeWidth="1.5" />
    </Svg>,
    true,
  ],
  [
    "Picture Manager",
    <Svg s={22} v={22}>
      <rect x=".5" y=".5" width="21" height="21" fill="#b3201f" stroke="#e59a95" />
      <rect x="4" y="4" width="14" height="14" fill="none" stroke="#f4dedc" strokeWidth="1.5" />
      <path d="M4 6 H12 L9 12 L4 10Z M18 4 V18 H10Z" fill="#f4dedc" />
      <path d="M17 4 L9 14 L6 11" fill="none" stroke="#fff" strokeWidth="1.5" />
      <path d="M7 18 L10 13 L13 18Z" fill="#f4dedc" />
    </Svg>,
    true,
  ],
  [
    "Snipping Tool",
    <Svg s={24} v={24}>
      <ellipse cx="11" cy="13" rx="10" ry="6" transform="rotate(-20 11 13)" fill="#8b8b8b" />
      <ellipse cx="12" cy="8" rx="10" ry="6" transform="rotate(-20 12 8)" fill="#f3f3f3" stroke="#d5252a" strokeWidth="1.6" />
      <path d="M9 6 L17 16 M16 4 L14 16" stroke="#999" />
      <circle cx="15" cy="19" r="2.5" fill="none" stroke="#1a78c2" strokeWidth="1.6" />
      <circle cx="20" cy="16" r="2.5" fill="none" stroke="#1a78c2" strokeWidth="1.6" />
    </Svg>,
    true,
  ],
];

/* ---------- components ---------- */

const DesktopItem = ({ label, art }) => (
  <ShortcutCell>
    {art}
    <ShortcutLabel>{label}</ShortcutLabel>
  </ShortcutCell>
);

const Menu = ({ items }) =>
  items.map((item, i) =>
    item === null ? (
      <Separator key={i} role="separator" />
    ) : (
      <MenuRow key={i}>
        <MenuButton role="menuitem" $hot={item.hot} $bold={item.bold}>
          <IconSlot>{item.icon}</IconSlot>
          <MenuText>{item.label}</MenuText>
          {(item.sub || item.arrow) && (
            <svg width="8" height="14" viewBox="0 0 8 14" aria-hidden="true">
              <path d="M1 1 L7 7 L1 13" fill="none" stroke="#234" />
            </svg>
          )}
        </MenuButton>
        {item.sub && (
          <SubMenu role="menu" aria-label={item.label}>
            <Menu items={item.sub} />
          </SubMenu>
        )}
      </MenuRow>
    )
  );

const Explorer = () => (
  <Window>
    <TitleBar>
      <QuickAccess>
        <DriveIcon />
        <Divider />
        <ToolButton aria-label="Properties">
          <SheetIcon />
        </ToolButton>
        <ToolButton aria-label="New folder">
          <FolderIcon />
        </ToolButton>
        <ToolButton aria-label="Customize toolbar">
          <Svg s={8} v={8}>
            <path d="M0 1.5 H8" stroke="#000" />
            <path d="M0 4 H8 L4 8Z" fill="#000" />
          </Svg>
        </ToolButton>
        <Divider />
      </QuickAccess>
      <Title>New Volume (D:)</Title>
      <WindowButton aria-label="Minimize">
        <Svg s={10} v={10}>
          <path d="M0 5.5 H10" stroke="#000" />
        </Svg>
      </WindowButton>
      <WindowButton aria-label="Maximize">
        <Svg s={10} v={10}>
          <rect x=".5" y=".5" width="9" height="9" fill="none" stroke="#000" />
        </Svg>
      </WindowButton>
      <WindowButton aria-label="Close">
        <Svg s={10} v={10}>
          <path d="M0 0 L10 10 M10 0 L0 10" stroke="#000" />
        </Svg>
      </WindowButton>
    </TitleBar>
    <Ribbon>
      <Tab $file>File</Tab>
      <Tab>Home</Tab>
      <Tab>Share</Tab>
      <Tab>View</Tab>
      <RibbonEnd>
        <ToolButton aria-label="Expand the ribbon">
          <Chevron dir="down" size={10} color="#9a9a9a" w={1} />
        </ToolButton>
        <Help aria-label="Help">?</Help>
      </RibbonEnd>
    </Ribbon>
    <AddressRow>
      <NavButton aria-label="Back" $width={30}>
        <Arrow />
      </NavButton>
      <NavButton aria-label="Forward" $width={30}>
        <Arrow dir="right" color="#d5d5d5" />
      </NavButton>
      <NavButton aria-label="Recent locations" $width={16}>
        <Chevron dir="down" />
      </NavButton>
      <NavButton aria-label="Up" $width={26}>
        <Arrow dir="up" />
      </NavButton>
      <Address>
        <DriveIcon />
        <Chevron />
        <Crumb>This PC</Crumb>
        <Chevron />
        <Crumb>New Volume (D:)</Crumb>
        <AddressEnd>
          <ToolButton aria-label="Previous locations">
            <Chevron dir="down" size={10} w={2} />
          </ToolButton>
          <Refresh aria-label="Refresh">
            <Svg s={12} v={12}>
              <path d="M4 2.5 A4.2 4.2 0 1 0 8.5 2.6" fill="none" stroke="#6b6b6b" strokeWidth="1.6" />
              <path d="M2 1.5 H5.5 V5" fill="none" stroke="#6b6b6b" strokeWidth="1.6" />
            </Svg>
          </Refresh>
        </AddressEnd>
      </Address>
      <SearchBox>
        <input type="search" aria-label="Search New Volume (D:)" placeholder="Search New Volume (D:)" />
        <Svg s={12} v={12}>
          <circle cx="7.5" cy="4.5" r="3.5" fill="none" stroke="#757575" strokeWidth="1.5" />
          <path d="M5 7 L1 11" stroke="#757575" strokeWidth="2" />
        </Svg>
      </SearchBox>
    </AddressRow>
    <Body>
      <NavPane>
        {navItems.map((item, i) => (
          <NavItem key={i} $root={item.root} $selected={item.selected}>
            {item.icon}
            <span>{item.label}</span>
            {item.pinned && <PinIcon />}
          </NavItem>
        ))}
      </NavPane>
      <ScrollTrack>
        <ScrollArrow aria-label="Scroll up">
          <Chevron dir="up" size={10} color="#505050" w={1.6} />
        </ScrollArrow>
        <ScrollThumb />
        <ScrollArrow aria-label="Scroll down">
          <Chevron dir="down" size={10} color="#505050" w={1.6} />
        </ScrollArrow>
      </ScrollTrack>
      <FileGrid>
        {files.map(([name, kind]) => (
          <File key={name} $selected={kind === "pdf"}>
            <Thumb $file={kind === "pdf" || kind === "ppt"}>
              {kind === "pdf" && <PdfArt />}
              {kind === "ppt" && <PptArt />}
              {kind !== "pdf" && kind !== "ppt" && <FolderArt kind={kind} />}
            </Thumb>
            <FileName>{name}</FileName>
          </File>
        ))}
      </FileGrid>
    </Body>
    <StatusBar>
      <Status>14 items</Status>
      <Status>
        <span>1 item selected</span>
        <span>196 KB</span>
      </Status>
      <ViewButtons>
        <ViewButton aria-label="Details">
          <Svg>
            <rect x=".5" y="1.5" width="4" height="12" fill="#fff" stroke="#8a8a8a" />
            <path d="M2 4.5 H3 M2 7.5 H3 M2 10.5 H3" stroke="#c0392b" />
            <path d="M6 3.5 H10 M12 3.5 H16 M6 7.5 H10 M12 7.5 H16 M6 11.5 H10 M12 11.5 H16" stroke="#8a8a8a" />
          </Svg>
        </ViewButton>
        <ViewButton aria-label="Large icons" $on>
          <PictureIcon />
        </ViewButton>
      </ViewButtons>
    </StatusBar>
  </Window>
);

const Taskbar = () => (
  <Bar>
    <StartButton aria-label="Start">
      <Svg>
        <path
          d="M0 2.3 L6.5 1.4 V7.6 H0Z M7.3 1.3 L16 0 V7.6 H7.3Z M0 8.4 H6.5 V14.6 L0 13.7Z M7.3 8.4 H16 V16 L7.3 14.7Z"
          fill="#fff"
        />
      </Svg>
    </StartButton>
    <TaskSearch>
      <Svg s={22} v={22}>
        <circle cx="11" cy="11" r="9" fill="none" stroke="#111" strokeWidth="2.5" />
      </Svg>
      <input type="text" aria-label="Type here to search" placeholder="Type here to search" />
      <Svg>
        <path
          d="M5.5 .5 H10.5 V10.5 H5.5Z M2.5 7 V11 Q3 13.5 5 13.5 H11 Q13 13.5 13.5 11 V7 M8 13.5 V16 M5 15.5 H11"
          fill="none"
          stroke="#333"
        />
      </Svg>
    </TaskSearch>
    <TaskList>
      {taskApps.map(([name, icon, running]) => (
        <TaskButton key={name} aria-label={name} $running={running} $active={name === "File Explorer"}>
          {icon}
        </TaskButton>
      ))}
    </TaskList>
    <Tray>
      <ToolButton aria-label="Show hidden icons">
        <Chevron dir="up" size={14} color="#fff" w={0.8} />
      </ToolButton>
      <ToolButton aria-label="Network">
        <Svg s={14} v={14}>
          <g fill="none" stroke="#fff">
            <path d="M1 13 A12 12 0 0 1 13 1" stroke="#999" />
            <path d="M4 13 A9 9 0 0 1 13 4 M7 13 A6 6 0 0 1 13 7 M10 13 A3 3 0 0 1 13 10" />
          </g>
          <rect x="11" y="11" width="2" height="2" fill="#fff" />
        </Svg>
      </ToolButton>
      <ToolButton aria-label="Volume">
        <Svg>
          <path d="M1 5.5 H4 L8 2 V14 L4 10.5 H1Z M10 5.5 Q12 8 10 10.5 M12 3.5 Q15 8 12 12.5" fill="none" stroke="#fff" />
          <path d="M14 2 Q17 8 14 14" fill="none" stroke="#999" />
        </Svg>
      </ToolButton>
      <Clock>
        <span>6:17 PM</span>
        <span>07/20/2018</span>
      </Clock>
      <Notices aria-label="2 notifications">
        <Svg s={18} v={18}>
          <path d="M1 1 H17 V13 H8 L5 16 V13 H1Z" fill="#fff" />
          <path d="M4 4.5 H14 M4 7.5 H14 M4 10.5 H10" stroke="#111" />
        </Svg>
        <Count>2</Count>
      </Notices>
    </Tray>
  </Bar>
);

export default function App() {
  return (
    <Screen>
      <GlobalStyle />
      <Wallpaper />
      <DesktopArea>
        {desktopLeft.map((column, i) => (
          <DesktopColumn key={i}>
            {column.map(([label, art]) => (
              <DesktopItem key={label} label={label} art={art} />
            ))}
          </DesktopColumn>
        ))}
        <DesktopColumn $end>
          {desktopRight.map(([label, art]) => (
            <DesktopItem key={label} label={label} art={art} />
          ))}
        </DesktopColumn>
        <Explorer />
        <ContextMenu role="menu" aria-label="File actions">
          <Menu items={menuItems} />
        </ContextMenu>
      </DesktopArea>
      <Taskbar />
    </Screen>
  );
}

/* ---------- styles ---------- */

const Screen = styled.div`
  position: relative;
  min-height: 100vh;
  display: flex;
  flex-direction: column;
  overflow: hidden;
`;

const WallpaperSvg = styled.svg`
  position: absolute;
  inset: 0;
  width: 100%;
  height: 100%;
`;

const DesktopArea = styled.main`
  position: relative;
  flex: 1;
  display: flex;
`;

const DesktopColumn = styled.div`
  display: flex;
  flex-direction: column;
  width: 76px;
  margin-left: ${(p) => (p.$end ? "auto" : "0")};
  margin-right: ${(p) => (p.$end ? "4px" : "0")};
`;

const ShortcutCell = styled.button`
  display: flex;
  flex-direction: column;
  align-items: center;
  height: 103px;
  padding-top: 8px;
`;

const ShortcutLabel = styled.span`
  width: 80px;
  margin-top: 2px;
  color: #fff;
  text-align: center;
  text-shadow: 0 1px 2px #000, 1px 1px 2px #000;
`;

const Stack = styled.span`
  display: grid;
  > * {
    grid-area: 1 / 1;
  }
`;

const Tile = styled.span`
  display: flex;
  align-items: center;
  justify-content: center;
  width: 16px;
  height: 16px;
  background: ${(p) => p.$bg};
`;

const Window = styled.section`
  position: absolute;
  top: 29px;
  left: 174px;
  right: 139px;
  height: 581px;
  display: flex;
  flex-direction: column;
  background: #fff;
  border: 1px solid #1979ca;
  box-shadow: 0 2px 14px rgba(0, 0, 0, 0.5);
`;

const TitleBar = styled.header`
  display: flex;
  align-items: center;
  height: 30px;
  flex-shrink: 0;
`;

const QuickAccess = styled.div`
  display: flex;
  align-items: center;
  gap: 7px;
  padding-left: 8px;
`;

const Divider = styled.span`
  width: 1px;
  height: 12px;
  background: #8a8a8a;
`;

const ToolButton = styled.button`
  display: flex;
  align-items: center;
  justify-content: center;
`;

const Title = styled.h1`
  flex: 1;
  margin: 0;
  padding: 0 0 2px 8px;
  font-size: 12px;
  font-weight: 400;
`;

const WindowButton = styled.button`
  display: flex;
  align-items: center;
  justify-content: center;
  width: 46px;
  height: 30px;
`;

const Ribbon = styled.nav`
  display: flex;
  height: 24px;
  flex-shrink: 0;
  border-bottom: 1px solid #dadbdc;
`;

const Tab = styled.button`
  width: ${(p) => (p.$file ? "56px" : "58px")};
  height: 23px;
  color: ${(p) => (p.$file ? "#fff" : "#444")};
  background: ${(p) => (p.$file ? "#1979ca" : "none")};
`;

const RibbonEnd = styled.div`
  display: flex;
  align-items: center;
  gap: 10px;
  margin-left: auto;
  padding-right: 4px;
`;

const Help = styled.button`
  width: 14px;
  height: 14px;
  border-radius: 50%;
  background: #0f6fc6;
  color: #fff;
  font-size: 11px;
  line-height: 14px;
  font-weight: 700;
`;

const AddressRow = styled.div`
  display: flex;
  align-items: center;
  height: 35px;
  flex-shrink: 0;
  padding: 6px 12px 7px 4px;
`;

const NavButton = styled.button`
  display: flex;
  align-items: center;
  justify-content: center;
  width: ${(p) => p.$width}px;
  height: 22px;
`;

const Address = styled.div`
  display: flex;
  align-items: center;
  flex: 1;
  gap: 4px;
  height: 22px;
  padding-left: 3px;
  border: 1px solid #d9d9d9;
`;

const Crumb = styled.button`
  padding: 0 3px 2px;
`;

const AddressEnd = styled.div`
  display: flex;
  gap: 2px;
  height: 100%;
  margin-left: auto;
`;

const Refresh = styled.button`
  display: flex;
  align-items: center;
  justify-content: center;
  width: 18px;
  border-left: 1px solid #d9d9d9;
`;

const SearchBox = styled.label`
  display: flex;
  align-items: center;
  width: 202px;
  height: 22px;
  margin-left: 12px;
  padding: 0 8px;
  border: 1px solid #d9d9d9;
  input {
    flex: 1;
    min-width: 0;
    padding-bottom: 2px;
    outline: none;
  }
  input::placeholder {
    color: #6d6d6d;
    opacity: 1;
  }
`;

const Body = styled.div`
  display: flex;
  flex: 1;
  min-height: 0;
`;

const NavPane = styled.nav`
  width: 140px;
  overflow: hidden;
`;

const NavItem = styled.button`
  display: flex;
  align-items: center;
  gap: 5px;
  width: 139px;
  height: 24px;
  margin-top: ${(p) => (p.$root ? "8px" : "0")};
  padding-left: ${(p) => (p.$root ? "24px" : "32px")};
  background: ${(p) => (p.$selected ? "#d9d9d9" : "none")};
  white-space: nowrap;
  overflow: hidden;
  span {
    flex: 1;
    padding-bottom: 2px;
    text-align: left;
  }
  span + svg {
    margin-right: 2px;
  }
`;

const ScrollTrack = styled.div`
  display: flex;
  flex-direction: column;
  width: 16px;
  background: #f0f0f0;
`;

const ScrollArrow = styled.button`
  display: flex;
  align-items: center;
  justify-content: center;
  height: 17px;
`;

const ScrollThumb = styled.div`
  flex: 1;
  margin: 46px 0 19px;
  background: #cdcdcd;
`;

const FileGrid = styled.div`
  display: grid;
  flex: 1;
  grid-template-columns: repeat(auto-fill, 105px);
  align-content: start;
  gap: 1px 6px;
  margin-left: 2px;
  padding: 6px 0 0 15px;
  border-left: 1px solid #f0f0f0;
`;

const File = styled.button`
  display: flex;
  flex-direction: column;
  align-items: center;
  height: 131px;
  background: ${(p) => (p.$selected ? "#cce8ff" : "none")};
  box-shadow: ${(p) => (p.$selected ? "inset 0 0 0 1px #99d1ff" : "none")};
`;

const Thumb = styled.span`
  display: flex;
  align-items: flex-end;
  justify-content: center;
  width: 96px;
  height: 98px;
  padding: ${(p) => (p.$file ? "0 0 6px" : "0 0 2px 4px")};
`;

const FileName = styled.span`
  height: 30px;
  overflow: hidden;
  text-align: center;
  white-space: pre;
`;

const StatusBar = styled.footer`
  display: flex;
  height: 23px;
  flex-shrink: 0;
  padding: 0 4px 0 6px;
  color: #1e395b;
`;

const Status = styled.div`
  display: flex;
  align-items: center;
  gap: 6px;
  padding: 0 9px 0 8px;
`;

const ViewButtons = styled.div`
  display: flex;
  margin-left: auto;
`;

const ViewButton = styled.button`
  display: flex;
  align-items: center;
  justify-content: center;
  width: 22px;
  height: 23px;
  background: ${(p) => (p.$on ? "#cbe8f6" : "none")};
  border: ${(p) => (p.$on ? "1px solid #26a0da" : "none")};
`;

const MenuPanel = styled.div`
  position: absolute;
  padding: 4px 2px;
  background: #f1f1f1;
  border: 1px solid #a0a0a0;
  box-shadow: 3px 3px 3px rgba(0, 0, 0, 0.45);
`;

const ContextMenu = styled(MenuPanel)`
  top: 346px;
  left: 735px;
  width: 434px;
  z-index: 2;
`;

const SubMenu = styled(MenuPanel)`
  top: -3px;
  left: calc(100% - 3px);
  width: 231px;
  z-index: 3;
`;

const MenuRow = styled.div`
  position: relative;
`;

const MenuButton = styled.button`
  display: flex;
  align-items: center;
  width: 100%;
  height: 22px;
  padding: 0 8px;
  background: ${(p) => (p.$hot ? "#d9d9d9" : "none")};
  font-weight: ${(p) => (p.$bold ? 700 : 400)};
`;

const IconSlot = styled.span`
  width: 16px;
  margin-right: 8px;
`;

const MenuText = styled.span`
  flex: 1;
  padding-bottom: 2px;
  text-align: left;
  white-space: nowrap;
`;

const Separator = styled.div`
  height: 1px;
  margin: 3px 8px;
  background: #919191;
`;

const Bar = styled.footer`
  position: relative;
  display: flex;
  height: 40px;
  background: #05090f;
  color: #fff;
`;

const StartButton = styled.button`
  display: flex;
  align-items: center;
  justify-content: center;
  width: 48px;
`;

const TaskSearch = styled.label`
  display: flex;
  align-items: center;
  gap: 9px;
  width: 344px;
  padding: 0 12px 0 9px;
  background: #f2f2f2;
  border-top: 1px solid #c0c0c0;
  color: #444;
  input {
    flex: 1;
    padding-bottom: 2px;
    font-size: 15px;
    outline: none;
  }
  input::placeholder {
    color: #444;
    opacity: 1;
  }
`;

const TaskList = styled.div`
  display: flex;
  gap: 1px;
  padding-left: 3px;
`;

const TaskButton = styled.button`
  display: flex;
  align-items: center;
  justify-content: center;
  width: 48px;
  background-color: ${(p) => (p.$active ? "#3a3f45" : "transparent")};
  background-image: ${(p) => (p.$running ? "linear-gradient(#76b9ed, #76b9ed)" : "none")};
  background-repeat: no-repeat;
  background-position: center bottom;
  background-size: ${(p) => (p.$active ? "100% 2px" : "40px 2px")};
`;

const Tray = styled.div`
  display: flex;
  align-items: center;
  gap: 9px;
  margin-left: auto;
  margin-right: 4px;
  padding-right: 11px;
  border-right: 1px solid #4a4f55;
`;

const Clock = styled.time`
  display: flex;
  flex-direction: column;
  align-items: center;
  line-height: 18px;
`;

const Notices = styled.button`
  position: relative;
  display: flex;
  width: 30px;
  padding-left: 5px;
`;

const Count = styled.span`
  position: absolute;
  right: 0;
  top: 6px;
  width: 16px;
  height: 16px;
  border: 1px solid #999;
  border-radius: 50%;
  background: #222;
  font-size: 10px;
  line-height: 14px;
`;
